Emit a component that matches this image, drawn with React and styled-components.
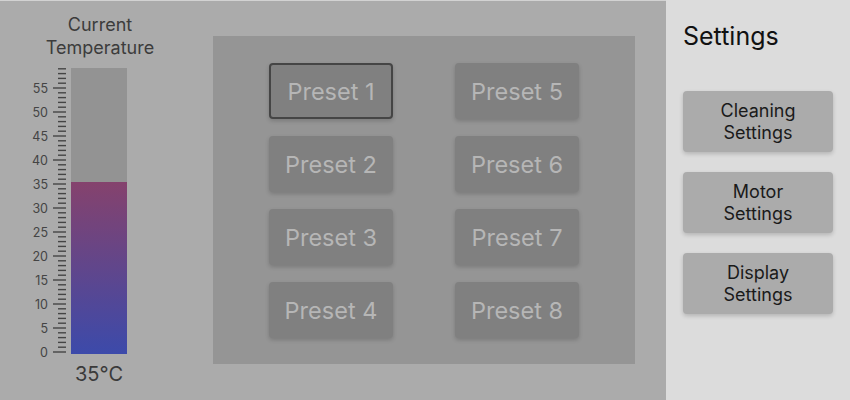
import React from 'react';
import styled, { createGlobalStyle } from 'styled-components';

const GlobalStyle = createGlobalStyle`
  html, body {
    margin: 0;
    padding: 0;
    background: #dcdcdc;
  }
  body {
    font-family: Inter, "Noto Sans", "Liberation Sans", sans-serif;
  }
`;

const Screen = styled.div`
  display: flex;
  width: 850px;
  height: 400px;
  overflow: hidden;
`;

const MainArea = styled.div`
  display: flex;
  width: 666px;
  height: 400px;
  box-sizing: border-box;
  background: #ababab;
  border-top: 1px solid #d2d2d2;
`;

const ThermoColumn = styled.div`
  display: flex;
  flex-direction: column;
  align-items: center;
  width: 200px;
  padding-top: 12px;
`;

const ThermoTitle = styled.div`
  font-size: 18px;
  line-height: 23px;
  color: #3c3c3c;
  text-align: center;
  width: 200px;
`;

const ThermoRow = styled.div`
  display: flex;
  align-self: flex-start;
  padding-left: 31px;
  margin-top: 9px;
`;

const ScaleSvg = styled.svg`
  display: block;
  width: 40px;
  height: 286px;
`;

const Bar = styled.div`
  position: relative;
  width: 56px;
  height: 286px;
  background: #939393;
`;

const BarFill = styled.div`
  position: absolute;
  left: 0;
  right: 0;
  bottom: 0;
  background: linear-gradient(to bottom, #85426d, #3c4aaa);
`;

const TempReadout = styled.div`
  margin-top: 8px;
  font-size: 20px;
  line-height: 24px;
  color: #3a3a3a;
  margin-left: -2px;
`;

const PresetPanel = styled.div`
  display: grid;
  grid-template-columns: 124px 124px;
  grid-auto-rows: 56px;
  column-gap: 62px;
  row-gap: 17px;
  justify-content: center;
  align-content: start;
  margin-left: 13px;
  margin-top: 35px;
  width: 422px;
  height: 328px;
  box-sizing: border-box;
  padding-top: 27px;
  background: #959595;
`;

const PresetButton = styled.button`
  box-sizing: border-box;
  border: 2px solid ${p => (p.$active ? '#454545' : 'transparent')};
  border-radius: 4px;
  background: #808080;
  color: #b6b6b6;
  font-family: Inter, "Noto Sans", "Liberation Sans", sans-serif;
  font-size: 23.5px;
  padding: 0;
  box-shadow: 0 2px 4px rgba(0, 0, 0, 0.18);
  cursor: pointer;
`;

const Sidebar = styled.div`
  display: flex;
  flex-direction: column;
  width: 184px;
  box-sizing: border-box;
  padding: 20px 0 0 17px;
  background: #dcdcdc;
`;

const SidebarTitle = styled.div`
  font-size: 25px;
  line-height: 32px;
  color: #111;
`;

const SettingsList = styled.div`
  display: flex;
  flex-direction: column;
  gap: 20px;
  margin-top: 39px;
`;

const SettingsButton = styled.button`
  width: 150px;
  height: 61px;
  border: none;
  border-radius: 4px;
  background: #ababab;
  color: #1a1a1a;
  font-family: Inter, "Noto Sans", "Liberation Sans", sans-serif;
  font-size: 18px;
  line-height: 22px;
  padding: 0;
  box-shadow: 0 2px 4px rgba(0, 0, 0, 0.18);
  cursor: pointer;
`;

const UNIT = 4.8;
const ZERO_Y = 284;

const Scale = () => {
  const ticks = [];
  for (let v = 0; v <= 59; v++) {
    const y = ZERO_Y - v * UNIT;
    const major = v % 5 === 0;
    ticks.push(
      <line
        key={'t' + v}
        x1={major ? 22 : 27}
        x2={35}
        y1={y}
        y2={y}
        stroke="#444"
        strokeWidth="1.4"
      />
    );
    if (major) {
      ticks.push(
        <text
          key={'l' + v}
          x={17}
          y={y + 4.5}
          textAnchor="end"
          fontSize="12.5"
          fill="#444"
          fontFamily="Inter, 'Noto Sans', sans-serif"
        >
          {v}
        </text>
      );
    }
  }
  return (
    <ScaleSvg viewBox="0 0 40 286" style={{ overflow: 'visible' }}>
      {ticks}
    </ScaleSvg>
  );
};

const presets = [1, 5, 2, 6, 3, 7, 4, 8];
const settings = [
  ['Cleaning', 'Settings'],
  ['Motor', 'Settings'],
  ['Display', 'Settings'],
];

export default function App() {
  const temperature = 35;
  const fillHeight = ((temperature * UNIT + 2) / 286) * 100;

  return (
    <>
      <GlobalStyle />
      <Screen>
        <MainArea>
          <ThermoColumn>
            <ThermoTitle>
              Current
              <br />
              Temperature
            </ThermoTitle>
            <ThermoRow>
              <Scale />
              <Bar>
                <BarFill style={{ height: `${fillHeight + 0.8}%` }} />
              </Bar>
            </ThermoRow>
            <TempReadout>{temperature}°C</TempReadout>
          </ThermoColumn>
          <PresetPanel>
            {presets.map(n => (
              <PresetButton key={n} $active={n === 1}>
                Preset {n}
              </PresetButton>
            ))}
          </PresetPanel>
        </MainArea>
        <Sidebar>
          <SidebarTitle>Settings</SidebarTitle>
          <SettingsList>
            {settings.map(([a, b]) => (
              <SettingsButton key={a}>
                {a}
                <br />
                {b}
              </SettingsButton>
            ))}
          </SettingsList>
        </Sidebar>
      </Screen>
    </>
  );
}
